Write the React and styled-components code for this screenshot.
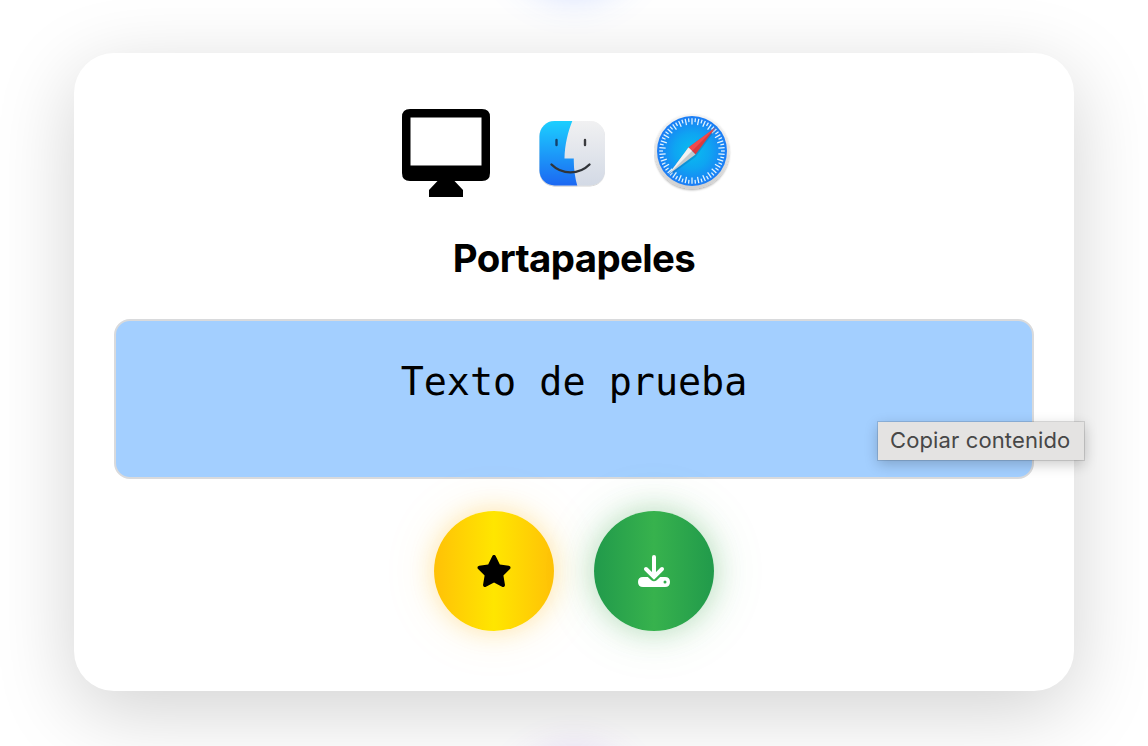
import React from "react";
import styled, { createGlobalStyle } from "styled-components";
import { FaStar } from "react-icons/fa6";

const GlobalStyle = createGlobalStyle`
  * { box-sizing: border-box; }
  html, body, #root { height: 100%; }
  body {
    margin: 0;
    background: #fff;
    overflow: hidden;
    font-family: Inter, "Liberation Sans", sans-serif;
  }
`;

const Page = styled.main`
  position: relative;
  height: 100%;
  padding-top: 53px;
  display: flex;
  justify-content: center;
  align-items: flex-start;
  overflow: hidden;
`;

const Glow = styled.div`
  position: absolute;
  left: 514px;
  ${(p) => p.$edge}: ${(p) => p.$offset};
  width: 120px;
  height: 120px;
  border-radius: 50%;
  box-shadow: 0 0 40px ${(p) => p.$color};
`;

const Card = styled.section`
  position: relative;
  width: 1000px;
  height: 638px;
  padding: 40px;
  border-radius: 40px;
  background: #fff;
  box-shadow: 0 20px 80px rgba(0, 0, 0, 0.18);
  display: flex;
  flex-direction: column;
  align-items: center;
`;

const Sources = styled.div`
  display: flex;
  align-items: center;
  width: 344px;
  height: 120px;
  gap: 44px;
  svg { display: block; flex: none; }
`;

const Title = styled.h2`
  margin: 22px 0 0;
  height: 46px;
  line-height: 46px;
  font-size: 38.4px;
  font-weight: 700;
  letter-spacing: -0.6px;
  color: #000;
`;

const Content = styled.div`
  width: 920px;
  height: 160px;
  margin-top: 38px;
  padding-top: 38px;
  border: 2px solid #d9dadc;
  border-radius: 16px;
  background: #a3cfff;
  text-align: center;
  font-family: "DejaVu Sans Mono", monospace;
  font-size: 38.4px;
  line-height: 46px;
  color: #000;
`;

const Actions = styled.div`
  display: flex;
  gap: 40px;
  margin-top: 32px;
`;

const RoundButton = styled.button`
  width: 120px;
  height: 120px;
  padding: 0;
  border: 0;
  border-radius: 50%;
  display: flex;
  align-items: center;
  justify-content: center;
  color: ${(p) => p.$ink};
  background: linear-gradient(90deg, ${(p) => p.$side}, ${(p) => p.$mid}, ${(p) => p.$side});
  box-shadow: ${(p) => p.$shadow};
`;

const Tooltip = styled.div`
  position: absolute;
  left: 804px;
  top: 369px;
  width: 206px;
  height: 38px;
  line-height: 37px;
  padding-left: 12px;
  font-size: 22px;
  letter-spacing: 0.12px;
  white-space: nowrap;
  color: #474747;
  background: #e4e3e2;
  box-shadow: 0 0 0 1px rgba(0, 0, 0, 0.12), 0 4px 14px rgba(0, 0, 0, 0.22);
`;

const MonitorIcon = () => (
  <svg width="88" height="88" viewBox="0 0 88 88">
    <path
      fillRule="evenodd"
      d="M8 0H80Q88 0 88 8V64Q88 72 80 72H52.5L61 81V88H27V81L35.500 72H8Q0 72 0 64V8Q0 0 8 0ZM8.500 8.500V56.500H79.500V8.500Z"
    />
  </svg>
);

const FinderIcon = () => (
  <svg width="76" height="76" viewBox="0 0.5 76 76">
    <defs>
      <linearGradient id="finder-blue" x1="0" y1="0" x2="0" y2="1">
        <stop offset="0" stopColor="#1dd0ff" />
        <stop offset="1" stopColor="#1c66f2" />
      </linearGradient>
      <linearGradient id="finder-gray" x1="0" y1="0" x2="0" y2="1">
        <stop offset="0" stopColor="#f1f1f2" />
        <stop offset="1" stopColor="#d2d9e5" />
      </linearGradient>
      <clipPath id="finder-shape">
        <rect x="5.500" y="6.500" width="65.500" height="64.500" rx="15" />
      </clipPath>
      <filter id="finder-shadow" x="-20%" y="-20%" width="140%" height="140%">
        <feDropShadow dx="0" dy="0.6" stdDeviation="0.7" floodOpacity="0.28" />
      </filter>
    </defs>
    <g filter="url(#finder-shadow)">
      <g clipPath="url(#finder-shape)">
        <rect x="5" y="6" width="67" height="66" fill="url(#finder-gray)" />
        <path
          d="M5 6H38.500C34 17 30.800 30 30.500 44H39.800C39.600 54 41 63 43.500 72H5Z"
          fill="url(#finder-blue)"
        />
      </g>
    </g>
    <g fill="none" stroke="#303439" strokeWidth="2.400" strokeLinecap="round">
      <path d="M22.500 25.500V30.500" stroke="#15416b" />
      <path d="M51 25.500V30.500" stroke="#3a3b3e" />
      <path d="M17.500 50C28 60.500 45 60.500 55.500 50" />
    </g>
  </svg>
);

const ticks = Array.from({ length: 60 }, (_, i) => i);

const SafariIcon = () => (
  <svg width="80" height="84" viewBox="2 1.5 80 84">
    <defs>
      <radialGradient id="safari-blue">
        <stop offset="0" stopColor="#08bdf0" />
        <stop offset="0.500" stopColor="#0ea5f2" />
        <stop offset="1" stopColor="#1c7cf5" />
      </radialGradient>
      <linearGradient id="safari-rim" x1="0" y1="0" x2="0" y2="1">
        <stop offset="0" stopColor="#f5f5f5" />
        <stop offset="1" stopColor="#d0d0d0" />
      </linearGradient>
      <filter id="safari-shadow" x="-20%" y="-20%" width="140%" height="140%">
        <feDropShadow dx="0" dy="1.200" stdDeviation="0.9" floodOpacity="0.35" />
      </filter>
    </defs>
    <circle cx="40" cy="42" r="37.300" fill="url(#safari-rim)" filter="url(#safari-shadow)" />
    <circle cx="40" cy="41.500" r="35" fill="url(#safari-blue)" />
    {ticks.map((i) => (
      <path
        key={i}
        d={i % 2 ? "M40 8.700V12.500" : "M40 8.700V15"}
        transform={`rotate(${i * 6} 40 41.500)`}
        stroke="#e4f5ff"
        strokeWidth="1.250"
      />
    ))}
    <path d="M64.500 19L43.500 47.500L18 66L37 40Z" fill="#064a86" opacity="0.25" />
    <path d="M63.500 18L36.500 38L43.500 45Z" fill="#d93a3e" />
    <path d="M63.500 18L36.500 38L40 41.500Z" fill="#f04a4e" />
    <path d="M16.500 65L36.500 38L43.500 45Z" fill="#c5c9cc" />
    <path d="M16.500 65L36.500 38L40 41.500Z" fill="#f2f2f2" />
  </svg>
);

const DownloadIcon = () => (
  <svg width="32" height="32" viewBox="0 0 32 32">
    <path
      d="M16 2V21M8 14L16 22L24 14"
      fill="none"
      stroke="#fff"
      strokeWidth="4"
      strokeLinecap="round"
      strokeLinejoin="miter"
    />
    <path
      fillRule="evenodd"
      fill="#fff"
      d="M5 22H9.800L13.300 25.300Q16 27.400 18.700 25.300L22.200 22H27Q32 22 32 27Q32 32 27 32H5Q0 32 0 27Q0 22 5 22ZM27 25.500A1.500 1.500 0 1 0 27 28.500A1.500 1.500 0 1 0 27 25.500Z"
    />
  </svg>
);

export default function App() {
  return (
    <>
      <GlobalStyle />
      <Page>
        <Glow $edge="top" $offset="-126px" $color="rgba(60, 110, 255, 0.28)" />
        <Glow $edge="bottom" $offset="-126px" $color="rgba(130, 60, 230, 0.2)" />
        <Card>
          <Sources>
            <MonitorIcon />
            <FinderIcon />
            <SafariIcon />
          </Sources>
          <Title>Portapapeles</Title>
          <Content>Texto de prueba</Content>
          <Actions>
            <RoundButton
              aria-label="Favorito"
              $ink="#000"
              $side="#ffc107"
              $mid="#ffe600"
              $shadow="0 0 24px rgba(255, 183, 20, 0.3), 0 0 56px rgba(255, 193, 7, 0.12)"
            >
              <FaStar size={36} />
            </RoundButton>
            <RoundButton
              aria-label="Descargar"
              $ink="#fff"
              $side="#219a4b"
              $mid="#37b24d"
              $shadow="0 0 30px rgba(55, 160, 67, 0.32), 0 0 60px rgba(55, 178, 77, 0.12)"
            >
              <DownloadIcon />
            </RoundButton>
          </Actions>
          <Tooltip role="tooltip">Copiar contenido</Tooltip>
        </Card>
      </Page>
    </>
  );
}
